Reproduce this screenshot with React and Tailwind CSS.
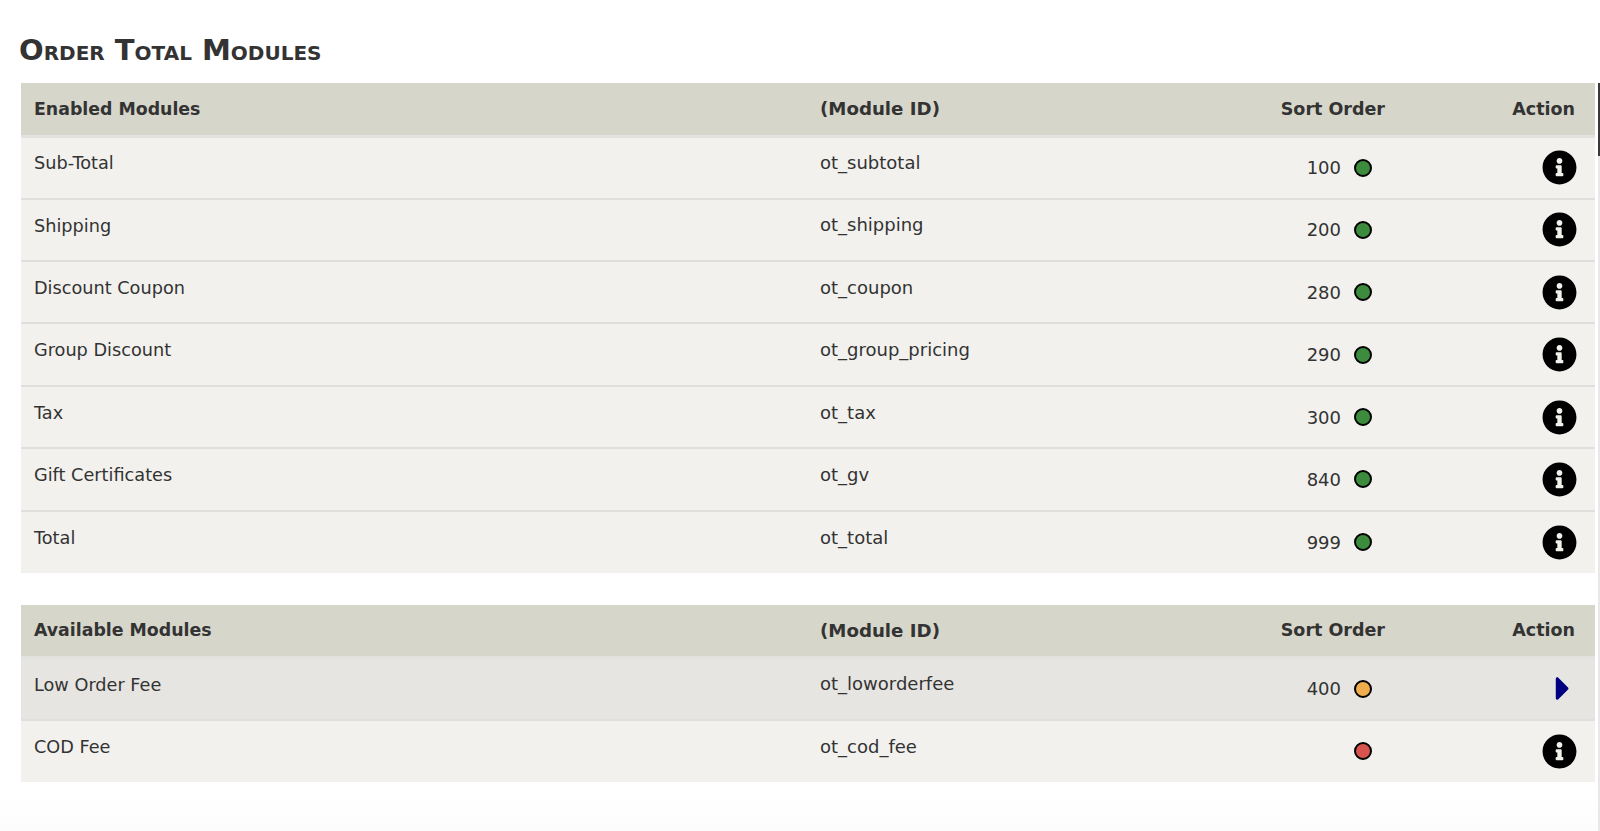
import { FaCaretRight, FaInfoCircle } from "react-icons/fa";

const enabled = [
  ["Sub-Total", "ot_subtotal", "100"],
  ["Shipping", "ot_shipping", "200"],
  ["Discount Coupon", "ot_coupon", "280"],
  ["Group Discount", "ot_group_pricing", "290"],
  ["Tax", "ot_tax", "300"],
  ["Gift Certificates", "ot_gv", "840"],
  ["Total", "ot_total", "999"],
];

const StatusDot = ({ color }) => (
  <span className={`inline-block h-[18px] w-[18px] rounded-full border-2 border-black ${color}`} />
);

const HeaderRow = ({ title, height }) => (
  <thead>
    <tr className={`${height} border-b-[3px] border-[#e2e2e0] bg-[#d6d6ca] text-[17.5px] font-bold`}>
      <th className="pl-[13px] text-left text-[17.35px] font-bold">{title}</th>
      <th className="text-left text-[18.2px] font-bold">(Module ID)</th>
      <th className="pr-[23px] text-right font-bold">Sort Order</th>
      <th className="pr-[20px] text-right font-bold">Action</th>
    </tr>
  </thead>
);

const ModuleRow = ({ name, id, order, dot, active, last }) => (
  <tr className={`h-[62.4px] text-[18px] ${active ? "bg-[#e6e5e1]" : "bg-[#f2f1ee]"} ${last ? "" : "border-b-2 border-[#dfdfdd]"}`}>
    <td className="pb-[8px] pl-[13px] align-middle text-[17.7px]">{name}</td>
    <td className="pb-[10px] align-middle">{id}</td>
    <td className="pr-[36px] text-right align-middle">
      <div className="flex items-center justify-end gap-[13px]">
        <span>{order}</span>
        <StatusDot color={dot} />
      </div>
    </td>
    <td className="pr-[18px] text-right align-middle">
      <div className="flex justify-end">
        {active ? (
          <FaCaretRight className="mr-[3px] h-[35px] w-[22px] scale-110 text-[#000080]" />
        ) : (
          <FaInfoCircle className="h-[35px] w-[35px] text-black" />
        )}
      </div>
    </td>
  </tr>
);

const ModuleTable = ({ title, headerHeight, children, className }) => (
  <table className={`w-full table-fixed border-collapse ${className}`}>
    <colgroup>
      <col className="w-[799px]" />
      <col className="w-[388px]" />
      <col className="w-[200px]" />
      <col />
    </colgroup>
    <HeaderRow title={title} height={headerHeight} />
    <tbody>{children}</tbody>
  </table>
);

export default function App() {
  return (
    <div className="relative h-[831px] overflow-hidden bg-gradient-to-b from-white from-[96%] to-[#fcfcfc] pl-[21px] pr-[5px] font-['DejaVu_Sans',sans-serif] text-[#333]">
      <h1 className="-ml-[2px] pt-[32px] text-[29px] leading-[36px] font-bold [font-variant:small-caps]">
        Order Total Modules
      </h1>
      <ModuleTable title="Enabled Modules" headerHeight="h-[53.3px]" className="mt-[15px]">
        {enabled.map(([name, id, order], i) => (
          <ModuleRow key={id} name={name} id={id} order={order} dot="bg-[#3d8b3d]" last={i === enabled.length - 1} />
        ))}
      </ModuleTable>
      <ModuleTable title="Available Modules" headerHeight="h-[52.3px]" className="mt-[32px]">
        <ModuleRow name="Low Order Fee" id="ot_loworderfee" order="400" dot="bg-[#f0ad4e]" active />
        <ModuleRow name="COD Fee" id="ot_cod_fee" order="" dot="bg-[#d9534f]" last />
      </ModuleTable>
      {/* thin page scrollbar on the right edge */}
      <div className="absolute top-[83px] right-0 bottom-0 w-[2px] bg-[#e8e8e8]">
        <div className="h-[73px] w-full bg-[#3a3a3a]" />
      </div>
    </div>
  );
}
